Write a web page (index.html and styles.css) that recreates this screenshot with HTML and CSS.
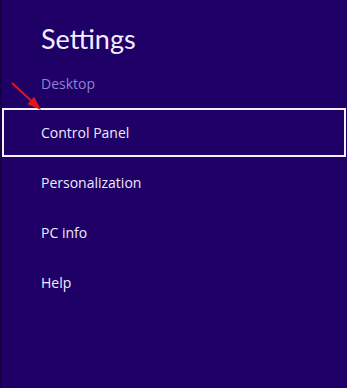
FILE: index.html
```html
<!DOCTYPE html>
<html>
<head>
<meta charset="utf-8">
<link rel="stylesheet" href="styles.css">
</head>
<body>
<div class="pane">
  <h1 class="title">Settings</h1>
  <div class="section">Desktop</div>
  <ul class="menu">
    <li class="item selected">Control Panel</li>
    <li class="item">Personalization</li>
    <li class="item">PC info</li>
    <li class="item">Help</li>
  </ul>
  <svg class="arrow" width="36" height="32" viewBox="0 0 36 32">
    <line x1="4" y1="3" x2="24" y2="21.5" stroke="#e0151d" stroke-width="2"/>
    <polygon points="33,30 19.4,24.2 26.2,16.8" fill="#e0151d"/>
  </svg>
</div>
</body>
</html>
```
FILE: styles.css
```css
html, body {
  margin: 0;
  padding: 0;
  background: #1f0066;
}
body {
  width: 347px;
  height: 388px;
  overflow: hidden;
  font-family: "Open Sans", "Noto Sans", sans-serif;
}
.pane {
  position: relative;
  height: 388px;
  border-left: 2px solid #150048;
  box-sizing: border-box;
  background: #1f0066;
}
.title {
  margin: 0;
  padding: 21px 0 0 39px;
  font-family: Lato, "Open Sans", sans-serif;
  font-weight: 400;
  font-size: 27px;
  line-height: 36px;
  color: #f2eeff;
}
.section {
  padding: 17px 0 0 39px;
  font-size: 14px;
  line-height: 20px;
  color: #8f82d6;
}
.menu {
  list-style: none;
  margin: 14px 0 0 0;
  padding: 0;
}
.item {
  height: 50px;
  box-sizing: border-box;
  padding: 0 0 0 39px;
  display: flex;
  align-items: center;
  font-size: 14px;
  color: #efeaff;
}
.item.selected {
  border: 2px solid #f4f0ff;
  padding-left: 37px;
  height: 49px;
  margin-right: 1px;
}
.arrow {
  position: absolute;
  left: 6px;
  top: 80px;
}
```
